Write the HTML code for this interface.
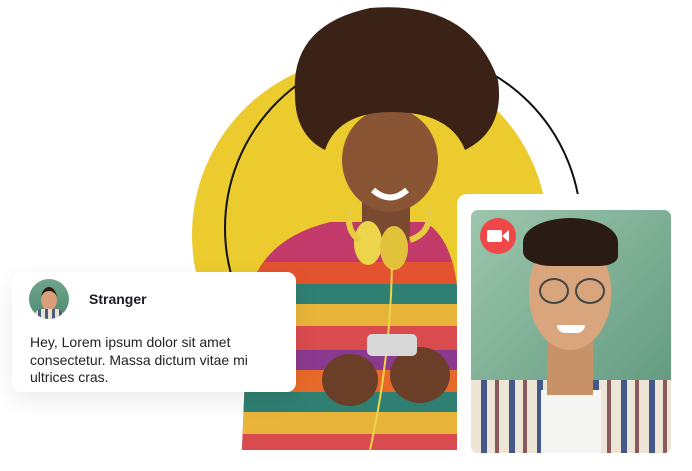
<!DOCTYPE html>
<html><head><style>
body{margin:0;width:692px;height:471px;background:#fff;position:relative;overflow:hidden;font-family:"Liberation Sans",sans-serif}
.a{position:absolute}
</style></head><body>
<svg class="a" style="left:0;top:0" width="692" height="471">
<circle cx="370" cy="235" r="178" fill="#ebcb2e"/>
<circle cx="403" cy="228" r="178" fill="none" stroke="#111" stroke-width="2"/>
<clipPath id="sw"><path d="M242 450 L248 300 Q258 240 330 222 L425 222 Q455 240 458 300 L458 450 Z"/></clipPath>
<g clip-path="url(#sw)">
<rect x="240" y="220" width="220" height="235" fill="#c23a6a"/>
<rect x="240" y="262" width="220" height="22" fill="#e3532f"/>
<rect x="240" y="284" width="220" height="20" fill="#2f7f72"/>
<rect x="240" y="304" width="220" height="22" fill="#e8b43a"/>
<rect x="240" y="326" width="220" height="24" fill="#d94b4e"/>
<rect x="240" y="350" width="220" height="20" fill="#8a3a8e"/>
<rect x="240" y="370" width="220" height="22" fill="#e86a2a"/>
<rect x="240" y="392" width="220" height="20" fill="#2f7f72"/>
<rect x="240" y="412" width="220" height="22" fill="#e8b43a"/>
<rect x="240" y="434" width="220" height="20" fill="#d94b4e"/>
</g>
<rect x="362" y="185" width="48" height="55" fill="#7a4a30"/>
<ellipse cx="390" cy="160" rx="48" ry="52" fill="#8a5535"/>
<path d="M373 190 Q390 205 407 190" stroke="#fff" stroke-width="6" fill="none"/>
<path d="M295 95 Q290 25 370 8 Q470 0 498 80 Q505 130 465 150 Q450 112 392 112 Q338 112 325 150 Q295 135 295 95Z" fill="#3a2216"/>
<ellipse cx="368" cy="243" rx="14" ry="22" fill="#ecd54a"/>
<ellipse cx="394" cy="248" rx="14" ry="22" fill="#e2c23a"/>
<path d="M350 205 Q345 232 360 240 M428 205 Q434 232 410 240" stroke="#e8cc40" stroke-width="6" fill="none"/>
<path d="M392 268 Q390 360 370 450" stroke="#ecd54a" stroke-width="2" fill="none"/>
<ellipse cx="350" cy="380" rx="28" ry="26" fill="#6b3e27"/>
<ellipse cx="420" cy="375" rx="30" ry="28" fill="#6b3e27"/>
<rect x="367" y="334" width="50" height="22" rx="5" fill="#d8d8d8"/>
</svg>

<div class="a" style="left:12px;top:272px;width:284px;height:120px;background:#fff;border-radius:9px;box-shadow:0 8px 24px rgba(0,0,0,.08)">
 <div class="a" style="left:17px;top:7px;width:40px;height:40px;border-radius:50%;background:linear-gradient(#6fa58c,#4f8a70);overflow:hidden">
  <div class="a" style="left:12px;top:8px;width:16px;height:20px;border-radius:50%;background:#d8a07a;border-top:4px solid #2a1a10"></div>
  <div class="a" style="left:5px;top:30px;width:30px;height:14px;border-radius:8px 8px 0 0;background:repeating-linear-gradient(90deg,#e8e0d0 0 4px,#4a5a80 4px 7px)"></div>
 </div>
 <div class="a" style="left:77px;top:19px;font-size:14px;font-weight:bold;color:#1b1b22">Stranger</div>
 <div class="a" style="left:18px;top:62px;width:262px;font-size:14px;line-height:17.5px;color:#222">Hey, Lorem ipsum dolor sit amet consectetur. Massa dictum vitae mi ultrices cras.</div>
</div>

<div class="a" style="left:457px;top:194px;width:230px;height:270px;background:#fff;border-radius:10px"></div>
<div class="a" style="left:471px;top:210px;width:200px;height:243px;border-radius:7px;overflow:hidden;background:linear-gradient(135deg,#9cc6ad,#5a9479)">
 <div class="a" style="left:0;top:170px;width:200px;height:80px;background:repeating-linear-gradient(90deg,#ede6d6 0 10px,#45588a 10px 16px,#ede6d6 16px 24px,#8a5a5a 24px 28px)"></div>
 <div class="a" style="left:70px;top:180px;width:60px;height:70px;background:#f4f4f2"></div>
 <div class="a" style="left:76px;top:110px;width:46px;height:75px;background:#c89268"></div>
 <div class="a" style="left:58px;top:30px;width:82px;height:110px;border-radius:45% 45% 50% 50%;background:#d9a57d"></div>
 <div class="a" style="left:52px;top:8px;width:95px;height:48px;border-radius:50% 50% 20% 30%;background:#2a1c14"></div>
 <div class="a" style="left:68px;top:68px;width:26px;height:22px;border:2px solid #444;border-radius:50%"></div>
 <div class="a" style="left:104px;top:68px;width:26px;height:22px;border:2px solid #444;border-radius:50%"></div>
 <div class="a" style="left:86px;top:115px;width:28px;height:8px;border-radius:0 0 10px 10px;background:#fff"></div>
 <div class="a" style="left:9px;top:8px;width:36px;height:36px;border-radius:50%;background:#f04848">
  <div class="a" style="left:7px;top:12px;width:15px;height:12px;background:#fff;border-radius:2px"></div>
  <div class="a" style="left:22px;top:12px;width:0;height:0;border-right:7px solid #fff;border-top:6px solid transparent;border-bottom:6px solid transparent"></div>
 </div>
</div>
</body></html>
